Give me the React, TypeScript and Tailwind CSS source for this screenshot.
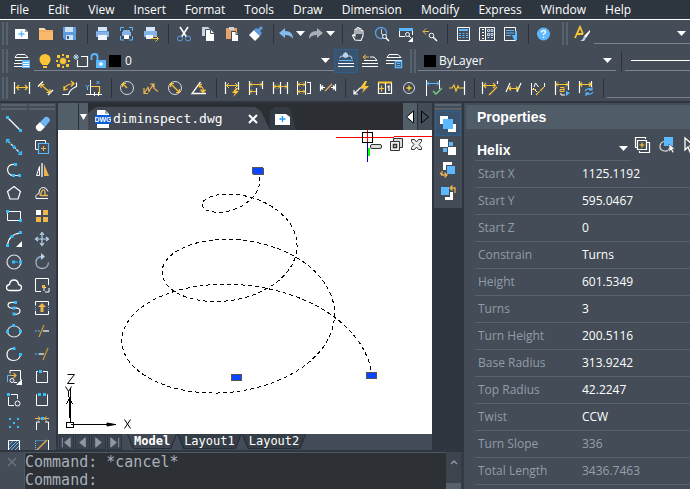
import clsx from "clsx";
import { useState } from "react";
import type { ReactNode } from "react";

const W = "#ffffff";
const Y = "#fcc437";
const B = "#5cb8ff";
const O = "#eab354";
const L = "#b9d3ee";

type DrawProps = { d: string; c?: string; w?: number; dash?: string };

const S = ({ d, c = W, w = 1, dash }: DrawProps) => (
  <path d={d} fill="none" stroke={c} strokeWidth={w} strokeDasharray={dash} />
);

const F = ({ d, c = W }: DrawProps) => <path d={d} fill={c} />;

function Icon({ children }: { children: ReactNode }) {
  return (
    <svg viewBox="0 0 18 18" className="h-[18px] w-[18px] shrink-0" aria-hidden="true">
      {children}
    </svg>
  );
}

function Caret() {
  return (
    <svg viewBox="0 0 9 5" className="pointer-events-none h-[5px] w-[9px] shrink-0" aria-hidden="true">
      <path d="M0 0h9L4.5 5z" fill="#fff" />
    </svg>
  );
}

type Tool = { label: string; icon: ReactNode; split?: boolean; active?: boolean } | null;

const standardTools: Tool[] = [
  { label: "New", icon: <><F d="M2 4h10l3 3v7H2z" /><F d="M12 4v3h3z" c="#8f9aa8" /><S d="M8.5 6v6M5.5 9h6" c={B} w={1.4} /></> },
  { label: "Open", icon: <><F d="M2 3h5l2 2h7v10H2z" c="#f0b065" /><F d="M2 3h5l2 2H2z" c="#fbdcb4" /><F d="M2 7h14v8H2z" c="#fab96d" /></> },
  { label: "Save", icon: <><F d="M2 2h13v13H4l-2-2z" c="#5d9bde" /><F d="M4 2h8v5H4z" c="#cfe1f5" /><F d="M5 10h7v5H5z" c="#cfe1f5" /><F d="M6 11h2v3H6z" c="#49627d" /></> },
  null,
  { label: "Print", icon: <><F d="M4 2h9v4H4z" c="#d6e6f7" /><F d="M2 6h13v6H2z" c="#86b4e8" /><F d="M2 6h13v1H2z" c="#5d9bde" /><F d="M4 10h9v5H4z" c="#eef5fc" /></> },
  { label: "Print Preview", icon: <><F d="M5 5h7v2H5zM4 7h9v4H4z" c="#86b4e8" /><F d="M6 10h5v4H6z" /><S d="M2.5 6V2.5H6M11 2.5h3.5V6M14.5 11v4H11M6 15H2.5v-4" c={B} /></> },
  { label: "Publish", icon: <><F d="M4 2h9v4H4z" c="#d6e6f7" /><F d="M2 6h13v6H2z" c="#86b4e8" /><F d="M4 10h7v4H4z" c="#eef5fc" /><S d="M9 13.5h7M13.5 10.5l3 3-3 3" c={Y} /></> },
  null,
  { label: "Cut", icon: <><S d="M5 2l6.5 10M13 2L6.5 12" w={1.6} /><circle cx="5" cy="13.5" r="2.5" fill="none" stroke="#5d9bde" /><circle cx="13" cy="13.5" r="2.5" fill="none" stroke="#5d9bde" /></> },
  { label: "Copy", icon: <><F d="M3 2h6l3 3v6H3z" c="#c9d5e2" /><F d="M7 5h5l3 3v8H7z" /><S d="M6.5 12V4.500H11M11.5 5v3.500H15" c="#434c57" /></> },
  { label: "Paste", icon: <><F d="M3 3h11v11H3z" c="#e8a366" /><F d="M6 2h5v3H6z" c="#c9d5e2" /><F d="M9 7h4l2 2v7H9z" /><S d="M8.5 16V6.5H13M13 7v2.5h2" c="#434c57" /></> },
  { label: "Match Properties", icon: <><F d="M2 10l5-5 6 6-5 5z" /><F d="M7 5l2-2 2 1 3-3 2 2-3 3 2 2-2 3z" c="#5d9bde" /></> },
  null,
  { label: "Undo", split: true, icon: <F d="M2 8l6-5v3c6 0 8 3 8 8-2-3-4-4-8-4v3z" c="#86b9ec" /> },
  { label: "Redo", split: true, icon: <F d="M16 8l-6-5v3c-6 0-8 3-8 8 2-3 4-4 8-4v3z" c="#a8afb8" /> },
  null,
  { label: "Pan", icon: <S d="M6 15L3.5 10.5l1-1L6 11V4.500q1-1 2 0V9 3q1-1 2 0v6-5q1-1 2 0v5-3q1-1 2 0v5l-2 4.500z" w={1.1} /> },
  { label: "Zoom Realtime", icon: <><circle cx="8" cy="8" r="5.5" fill="none" stroke="#5d9bde" strokeWidth="1.4" /><S d="M8.5 4v5l2 1" c={L} /><circle cx="11.5" cy="11.5" r="2" fill="#434c57" stroke="#fff" /><S d="M13 13l3 3" w={1.5} /></> },
  { label: "Zoom Window", icon: <><S d="M2 11.5h6M2.5 11V4" /><F d="M2 3h14v3H2z" c={B} /><S d="M15.5 6v4" /><circle cx="10.5" cy="9.5" r="2" fill="none" stroke="#fff" /><S d="M12 11l2 2" /><F d="M16 12v5h-5z" /></> },
  { label: "Zoom Previous", icon: <><S d="M2 6.5h6M5 3.5l-3 3 3 3" c={O} /><circle cx="10.5" cy="10.5" r="2.3" fill="none" stroke="#fff" /><S d="M12 12l4 4" w={1.5} /></> },
  null,
  { label: "Calculator", icon: <><S d="M3.5 2.5h12v13h-12z" /><F d="M5 4h9v2H5z" c={B} /><S d="M5 8.5h9M5 10.5h9M5 12.5h9" c={B} dash="2 1.5" w={1.2} /></> },
  { label: "Design Center", icon: <><S d="M1.5 2.5h15v13h-15zM7.500 3v12M4 4.5h2M4 7.5h2M4 10.5h2M4 13.5h2" /><S d="M9.5 4.5h2v2h-2zM13 4.5h2v2h-2zM9.5 8.5h2v2h-2zM13 8.5h2v2h-2zM9.5 12.5h2M13 12.5h2" c={L} /></> },
  { label: "Properties Palette", icon: <><S d="M2.5 2.5h11v13h-11z" /><S d="M4 5.5h8M4 8h8M4 10.5h5" c={B} /><F d="M10 10h3V6h2v9h-3z" c={B} /></> },
  null,
  { label: "Help", icon: <><circle cx="8.5" cy="9" r="6.5" fill={B} /><S d="M6.5 7.5q0-2 2-2t2 1.600q0 1.200-2 2v1.200M8.5 11.700V13" w={1.3} /></> },
];

const layerTools: Tool[] = [
  { label: "Make Current", active: true, icon: <><S d="M3 6q0-2 2-2h8q2 0 2 3" c={L} /><F d="M6 2l2.5-2L11 2v3L8.5 6 6 5z" c={L} /><S d="M2 8.5h14" c={B} /><S d="M1 11.5h16M1 14.5h16" /></> },
  { label: "Layer Previous", icon: <><S d="M2 5h6M5 2.5L2 5l3 2.5" c={O} /><S d="M9 5h4l3 3.500H3M1 11.5h16M1 14.5h16" /></> },
  { label: "Layer States", icon: <><S d="M4 2.5h9l3 3H2zM1 8.5h16M1 11.5h8" /><S d="M10.5 9.5h6v6h-6z" c={B} w={1.5} /><F d="M12 11h3v1h-3zM12 13h3v1h-3z" c={B} /></> },
];

const dimensionTools: Tool[] = [
  { label: "Linear", icon: <><S d="M1.5 3v12M16.5 3v12" w={1.2} /><S d="M3 8.5h12M6 6L3.5 8.5 6 11M12 6l2.5 2.5L12 11" c={Y} w={1.2} /></> },
  { label: "Aligned", icon: <><S d="M1 7.5L6 2.5M11 16l5-5" w={1.4} /><S d="M4 5.5l9 8M4 9V5.5h3.5M13 10v3.5H9.5" c={Y} w={1.2} /></> },
  { label: "Arc Length", icon: <><S d="M1.5 15.5h6q1-5 8-8v-4" w={1.2} /><S d="M3 11q1-6 10-6.500M3 7v4l4-1M10 2l3 2.5-3 3" c={Y} w={1.2} /></> },
  { label: "Ordinate", icon: <><S d="M5.5 1v15M1 15.5h16M9.5 13v4M13.5 13v4" /><S d="M6 7.5h8.5v7" c={Y} w={1.2} /><S d="M1 6l1.5 2.5L4 6M2.5 8v3M11.5 2l3 3M14.5 2l-3 3" c={B} /></> },
  null,
  { label: "Radius", icon: <><circle cx="9" cy="9" r="6.5" fill="none" stroke="#d4d9df" /><S d="M9 9L5 5M4.5 8V4.500H8" c={Y} w={1.2} /></> },
  { label: "Jogged", icon: <S d="M2 14.5l4-6 1 4 4-7 1 4 4 3M2 9v5.500h4M8 5h4v4" c={O} w={1.2} /> },
  { label: "Diameter", icon: <><circle cx="9" cy="9" r="6.5" fill="none" stroke="#d4d9df" /><S d="M5 5l8 8M4.5 8V4.500H8M13.5 10v3.500H10" c={Y} w={1.2} /></> },
  { label: "Angular", icon: <><S d="M10.5 3L2 14.5h14" w={1.3} /><S d="M9 6q5 2 4 7M12 5L8.5 6l2 3M10.5 10.5L13 13.5l2.5-3" c={Y} w={1.2} /></> },
  null,
  { label: "Quick Dimension", icon: <><S d="M2.5 3v12M15.5 3v8" w={1.2} /><S d="M3 6.5h12M6 4L3.5 6.5 6 9M12 4l2.5 2.5L12 9" c={Y} /><F d="M13 9l-4 5h3l-2 4 6-6h-3l2-3z" c={Y} /></> },
  { label: "Baseline", icon: <><S d="M2.5 2v14M15.5 2v8M9.5 9v7" w={1.2} /><S d="M3 5.5h12M5 3.5l-2 2 2 2M13 3.5l2 2-2 2M3 12.5h6M5 10.5l-2 2 2 2" c={Y} /></> },
  { label: "Continue", icon: <><S d="M2.5 3v12M9.5 3v12M16.5 3v12" w={1.2} /><S d="M3 7.5h13M5 5.5l-2 2 2 2M14 5.5l2 2-2 2M7 5.5l2 2-2 2" c={Y} /></> },
  { label: "Dimension Space", icon: <><S d="M2.5 2v14M10.5 2v14M12 3.5h4M12 14.5h4M15.5 4v11" /><S d="M3 5.5h7M5 3.5l-2 2 2 2M8 3.5l2 2-2 2M3 12.5h7M5 10.5l-2 2 2 2M8 10.5l2 2-2 2" c={Y} /></> },
  { label: "Dimension Break", icon: <><S d="M1.5 5v7M16.5 5v7M2 8.5h4M12 8.5h4M4 6.5l-2 2 2 2M14 6.5l2 2-2 2" w={1.2} /><S d="M6 12l7-7" c={O} w={1.2} /></> },
  null,
  { label: "Leader", icon: <><S d="M2 15l6-6h5M2 11v4h4" w={1.2} /><F d="M13 2L8 9h4l-2 5 7-7h-4l2-5z" c={Y} /></> },
  { label: "Tolerance", icon: <><S d="M2 3.5h14" c={Y} w={2} /><S d="M2.5 4v10.500h13V4M9.5 4v10M11.5 8l1.500-1v5" w={1.2} /><S d="M5.5 6.5v6M3 9.5h5" c={Y} w={1.2} /></> },
  { label: "Center Mark", icon: <><circle cx="9" cy="9" r="5.5" fill="none" stroke="#d4d9df" /><S d="M9 6.5v5M6.5 9h5" c={Y} w={1.4} /></> },
  { label: "Inspection", icon: <><S d="M2.5 1v16M15.5 1v9" /><S d="M3 4.5h12M5 2.5l-2 2 2 2M13 2.5l2 2-2 2" c={B} /><S d="M9 12l3 3 6-6" c="#7bd38b" w={1.3} /></> },
  { label: "Jogged Linear", icon: <><S d="M16.5 2v14" w={1.2} /><S d="M1 9h3l2-3 2 6 2-5 1 2h5" c={Y} w={1.2} /></> },
  null,
  { label: "Edit", icon: <><S d="M1.5 3v12M16.5 2v3" w={1.2} /><S d="M2 6.5h12M5 4L2.5 6.5 5 9M12 4l2.5 2.5L12 9M8 16l8-8" c={Y} w={1.1} /></> },
  { label: "Oblique", icon: <><S d="M1 13l4-9M12 13l4-9" w={1.2} /><S d="M4 9.5h9M6 7.5l-2 2 2 2M11 7.5l2 2-2 2" c={Y} w={1.2} /></> },
  { label: "Text Angle", icon: <><S d="M2.5 4v12M4 9l4 4M5 8l1.500-4 3 4M15.5 4v4" /><S d="M3 10.5h4M7 16l9-9" c={Y} w={1.1} dash="5 1" /></> },
  { label: "Text Edit", icon: <><S d="M2.5 2v14M15.5 2v9" w={1.2} /><S d="M3 5.5h12M5 3.5l-2 2 2 2M13 3.5l2 2-2 2M7 8.5h4v4H7v-2h4" c={Y} /><S d="M8 14v2h4" /><F d="M13 12l4 2-4 3z" c={B} /></> },
  { label: "Update", icon: <><S d="M2.5 2v12M14.5 2v6" w={1.2} /><S d="M3 5.5h11M5 3.5l-2 2 2 2M12 3.5l2 2-2 2" c={Y} w={1.2} /><S d="M8 12q3-4 7-1M15 8v3h-3M16 13q-3 4-7 1M9 17v-3h3" c={B} w={1.2} /></> },
  null,
];

const Node = ({ x, y }: { x: number; y: number }) => (
  <rect x={x - 1.5} y={y - 1.5} width="3" height="3" fill="#33bdfb" />
);

const drawTools: Tool[] = [
  { label: "Line", icon: <><S d="M3 3l12 12" w={1.2} /><Node x={2.5} y={2.5} /><Node x={15.5} y={15.5} /></> },
  { label: "Construction Line", icon: <><S d="M3 3l12 12" dash="3 1" w={1.2} /><Node x={9} y={9} /><S d="M1.5 5V1.500H5M16.5 13v3.500H13M2 2l3 3M16 16l-3-3" c="#33bdfb" w={1.2} /></> },
  { label: "Polyline", icon: <><S d="M10 3.5q-7-.5-7.500 5 .5 6 6 6h6" w={1.2} /><Node x={10.5} y={3.5} /><Node x={8.5} y={14.5} /><Node x={14.5} y={14.5} /></> },
  { label: "Polygon", icon: <S d="M9 2.5l6.5 5-2.5 7.500H5L2.5 7.5z" w={1.2} /> },
  { label: "Rectangle", icon: <><S d="M2.5 4.5h13v9h-13z" /><Node x={2.5} y={4.5} /><Node x={15.5} y={13.5} /></> },
  { label: "Arc", icon: <><S d="M2.5 15.5q1-11 12.500-12.500" w={1.2} /><Node x={2.5} y={15.5} /><Node x={7} y={6.5} /><Node x={15.5} y={2.5} /><F d="M17 11v6h-6z" /></> },
  { label: "Circle", icon: <><circle cx="9" cy="9" r="7" fill="none" stroke="#dde2e7" strokeWidth="1.2" /><S d="M9 9h6" c="#33bdfb" dash="4 1" /><Node x={8.5} y={9} /><Node x={15.5} y={9} /></> },
  { label: "Revision Cloud", icon: <S d="M5 14.5q-3.500 0-3.500-3 0-2.500 3-3Q5 4 9 4t4.500 4.500q3 .5 3 3 0 3-3.500 3z" w={1.3} /> },
  { label: "Spline", icon: <><S d="M11 3.500Q3 2.500 3 6t6 3 6 3-6 3.500" w={1.2} /><Node x={10.5} y={3.5} /><Node x={9} y={9} /><Node x={9} y={15} /></> },
  { label: "Ellipse", icon: <><ellipse cx="9" cy="9.5" rx="6.5" ry="5.5" fill="none" stroke="#dde2e7" strokeWidth="1.2" /><Node x={8.5} y={3.5} /><Node x={2.5} y={9.5} /><Node x={15.5} y={9.5} /></> },
  { label: "Ellipse Arc", icon: <><S d="M8 3.500Q2 4 2 9.500t6.500 6q6 0 7-6" w={1.2} /><Node x={9} y={3.5} /><Node x={15.5} y={9.5} /></> },
  { label: "Insert Block", icon: <><S d="M5 2.5h10.500V12M5 2.5v3" /><S d="M2.5 14V7.500h4" c={B} /><S d="M5 7.5h6M8.5 5l2.5 2.5L8.5 10" c={O} w={1.2} /><circle cx="7" cy="12.5" r="2" fill="none" stroke="#fff" /><S d="M9 14.5h3" /><F d="M17 11v6h-6z" /></> },
  { label: "Make Block", icon: <><S d="M6 3.5h6.500V8M3.5 6v8.500H9" /><Node x={3.5} y={3.5} /><circle cx="12.5" cy="12.5" r="2.5" fill="none" stroke="#fff" /></> },
  { label: "Point", icon: <><F d="M8 8h2v2H8zM4 4h2v2H4zM12 4h2v2h-2zM4 12h2v2H4zM12 12h2v2h-2z" c="#33bdfb" /></> },
  { label: "Hatch", icon: <><S d="M3.5 3.5h11v12h-11z" /><S d="M4 8l4-4M4 12l8-8M4 15L14 5M8 15l6-6M12 15l2-2" c={B} /></> },
];

const modifyTools: Tool[] = [
  { label: "Erase", icon: <><F d="M3 11l4-4 5 5-4 4q-2 1-4-1t-1-4z" /><F d="M7 7l5-5q2-1 4 1t0 4l-4 5z" c="#6fb6f2" /></> },
  { label: "Copy Objects", icon: <><S d="M5 11.500H2.500v-9h10V5" /><S d="M5.500 5.500h10v10h-10z" c={B} w={1.2} /><S d="M10.5 8v5M8 10.5h5" c={O} w={1.1} /></> },
  { label: "Mirror", icon: <><S d="M9 2v14" w={1.3} /><S d="M3.5 14.5h3v-9z" /><F d="M11 3l5 12h-5z" c={O} /></> },
  { label: "Offset", icon: <><S d="M15 14.500H3q-1-4 3-5 0-6 4.500-6 3 0 4.500 4" /><S d="M15 11.500H8q-2 0 0-2l1-3q3-2 3 2v3" c={O} w={1.3} /></> },
  { label: "Array", icon: <><F d="M3 3h5v5H3z" /><F d="M10 3h5v5h-5zM3 10h5v5H3zM10 10h5v5h-5z" c="#f0b64e" /></> },
  { label: "Move", icon: <S d="M9 3v12M3 9h12M7 5l2-2.500L11 5M7 13l2 2.500 2-2.500M5 7L2.500 9 5 11M13 7l2.500 2-2.500 2" c={L} w={1.2} /> },
  { label: "Rotate", icon: <><S d="M9 3.500Q3 4 3 9.500t6 6q6 0 6.500-6" c="#9db2c8" w={1.3} /><F d="M8 0l4 3.500L8 7z" c={L} /></> },
  { label: "Scale", icon: <><S d="M8 15.500H2.500v-13h13V9" /><S d="M11 15v-3.500h2M16 12v4h-4" /><F d="M9 9h3v3H9z" c="#f0b64e" /></> },
  { label: "Stretch", icon: <><S d="M2.5 6V2.500h13V6M2.5 12v3.500h13V12" /><S d="M2.5 6v6M15.5 6v6" c={B} dash="1 1" /><F d="M9 4l4 4h-2.500v5h-3V8H5z" c="#f0b64e" /></> },
  { label: "Trim", icon: <><S d="M2 9h5" c={B} dash="2 1" /><S d="M10 9h6" w={1.2} /><S d="M6 15L11 3" c="#c79335" w={1.3} /></> },
  { label: "Extend", icon: <><S d="M2 9h4" c={B} dash="2 1" /><S d="M6 9h5" w={1.2} /><S d="M10 15l5-12" c="#c79335" w={1.3} /></> },
  { label: "Break at Point", icon: <><S d="M5 3.500H3.500v11h11v-11H10" /><Node x={7.5} y={3.5} /></> },
  { label: "Break", icon: <><S d="M4 3.500h-.5v11h11v-11H14" /><Node x={6.5} y={3.5} /><Node x={11.5} y={3.5} /></> },
  { label: "Join", icon: <><S d="M3.5 16V8H7M15.5 16V8H12" /><S d="M2 4.500h5M5 2.500l2.500 2L5 6.500M16 4.500h-4M13.500 2.500l-2.500 2 2.500 2" c={O} /><Node x={9.5} y={4.5} /></> },
  { label: "Chamfer", icon: <><S d="M2.5 3.5h9M2.5 4v12" c={B} dash="1 1" /><S d="M3 14L14 3" c={O} w={1.2} /><S d="M15.5 3v13" /></> },
];

const orderTools: Tool[] = [
  { label: "Bring to Front", active: true, icon: <><F d="M1 1h8v3H4v5H1zM17 17H9v-3h5V9h3z" /><F d="M4 4h10v10H4z" c={B} /></> },
  { label: "Send to Back", icon: <><F d="M1 1h8v8H1zM9 9h8v8H9z" /><F d="M10 4h4v4h-4zM4 10h4v4H4z" c={B} /></> },
  { label: "Bring Above Objects", icon: <><F d="M4 1h9v3H7v5H4z" /><F d="M8 5h8v8H8z" c={B} /><S d="M3 10v4h5M5.500 11.500L8 14l-2.500 2.500M1 12l2 2" c={O} w={1.3} /></> },
  { label: "Send Under Objects", icon: <><F d="M14 8v8H6v-3h5V8z" /><F d="M2 3h8v8H2z" c={B} /><S d="M16 9V4h-5M13.500 1.500L11 4l2.500 2.500" c={O} w={1.3} /></> },
];

function ToolButton({ tool }: { tool: Tool }) {
  if (!tool) {
    return <span className="ml-[5px] mr-[3px] h-5 w-px shrink-0 bg-[#2c333c]" />;
  }
  return (
    <button
      type="button"
      aria-label={tool.label}
      title={tool.label}
      className={clsx(
        "flex shrink-0 items-center hover:bg-[#526071]",
        tool.split ? "h-6 w-[30px] gap-px" : "h-6 w-6 justify-center",
        tool.active && "bg-[#3a5470] outline outline-1 -outline-offset-1 outline-[#2f5f8c]"
      )}
    >
      <Icon>{tool.icon}</Icon>
      {tool.split && <Caret />}
    </button>
  );
}

function Grip() {
  return (
    <span className="mx-[2px] flex shrink-0 gap-[2px] self-stretch py-[2px]">
      <span className="w-[2px] bg-[#56626e]" />
      <span className="w-[2px] bg-[#56626e]" />
    </span>
  );
}

const menus = ["File", "Edit", "View", "Insert", "Format", "Tools", "Draw", "Dimension", "Modify", "Express", "Window", "Help"];

function MenuBar() {
  return (
    <nav className="flex h-5 shrink-0 items-center gap-[19px] border-b border-white bg-[#2d353e] pl-[10px]">
      {menus.map((m) => (
        <button key={m} type="button" className="text-[12px] leading-4 text-white">
          {m}
        </button>
      ))}
    </nav>
  );
}

function Toolbars() {
  return (
    <header className="shrink-0 overflow-hidden bg-[#434c57]">
      <div className="flex h-[27px] items-center">
        <Grip />
        {standardTools.map((t, i) => (
          <ToolButton key={i} tool={t} />
        ))}
        <span className="ml-1 flex h-full">
          <Grip />
        </span>
        <button type="button" aria-label="Text Style" className="flex h-6 w-6 shrink-0 items-center justify-center">
          <Icon>
            <S d="M2 13L7 2l3 7M4 9h6" c={Y} w={1.8} />
            <F d="M17 5l-6 6 2 2 4-6z" />
            <F d="M11 11l2 2-2 3H7q3-1 4-5z" c={L} />
          </Icon>
        </button>
        <div className="flex h-5 min-w-0 flex-1 items-center justify-end border-b border-[#7a838d] pr-1">
          <Caret />
        </div>
      </div>

      <div className="flex h-7 items-center">
        <Grip />
        <button type="button" aria-label="Layer Properties" className="flex h-6 w-6 shrink-0 items-center justify-center">
          <Icon>
            <S d="M4 2.5h8l3 3H2zM2 8.5h14M1 11.5h8M1 14.5h8" />
            <F d="M9 8h8v8H9z" c={B} />
            <S d="M10 10.5h6M10 12.5h6M10 14.5h6" />
          </Icon>
        </button>
        <div className="flex h-5 w-[300px] shrink-0 items-center border-b border-[#7a838d] pl-[2px] pr-1">
          <Icon>
            <circle cx="9" cy="7.5" r="5.5" fill={Y} />
            <F d="M6 11h6v2H6zM7 14h4v2H7z" c={Y} />
          </Icon>
          <Icon>
            <circle cx="9" cy="9" r="3.5" fill={Y} stroke="#434c57" strokeWidth=".5" />
            <F d="M3 3h3v3H3zM12 3h3v3h-3zM3 12h3v3H3zM12 12h3v3h-3zM8 2h2v2H8zM8 14h2v2H8zM2 8h2v2H2zM14 8h2v2h-2z" c={Y} />
          </Icon>
          <Icon>
            <S d="M5.5 8v6.500h10v-10H9" w={1.2} />
            <S d="M4 2v6M1 5h6M2 3l4 4M6 3L2 7" c={L} />
          </Icon>
          <Icon>
            <F d="M6 8h10v8H6z" c={B} />
            <S d="M1.5 8V4.500q0-2.500 3-2.500t3 2.500v4" c={B} w={1.8} />
            <S d="M11 10v4M9 12h4" w={1.4} />
          </Icon>
          <span className="ml-px h-3 w-3 shrink-0 bg-black" />
          <select aria-label="Layer" className="min-w-0 flex-1 appearance-none bg-transparent pl-1 text-[12px] leading-4 text-white outline-none">
            <option>0</option>
          </select>
          <Caret />
        </div>
        {layerTools.map((t, i) => (
          <ToolButton key={i} tool={t} />
        ))}
        <span className="ml-[2px] flex h-full">
          <Grip />
        </span>
        <div className="flex h-5 w-[198px] shrink-0 items-center border-b border-[#7a838d] pl-[6px] pr-1">
          <span className="h-3 w-3 shrink-0 bg-black" />
          <select aria-label="Color" className="min-w-0 flex-1 appearance-none bg-transparent pl-[3px] text-[12px] leading-4 text-white outline-none">
            <option>ByLayer</option>
          </select>
          <Caret />
        </div>
        <ToolButton tool={null} />
        <div className="flex h-5 min-w-0 flex-1 items-center border-b border-[#7a838d] pl-[6px]">
          <span className="h-px w-full bg-white" />
        </div>
      </div>

      <div className="flex h-[26px] items-center">
        <Grip />
        {dimensionTools.map((t, i) => (
          <ToolButton key={i} tool={t} />
        ))}
        <div className="h-5 min-w-0 flex-1 border-b border-[#7a838d]" />
      </div>
    </header>
  );
}

function ToolColumn({ tools }: { tools: Tool[] }) {
  return (
    <div className="flex w-7 shrink-0 flex-col items-center">
      <div className="mb-[2px] flex w-full flex-col gap-[2px] px-px pt-px">
        <span className="h-[2px] bg-[#56626e]" />
        <span className="h-[2px] bg-[#56626e]" />
      </div>
      {tools.map((t) => (
        <button
          key={t?.label}
          type="button"
          aria-label={t?.label}
          title={t?.label}
          className={clsx(
            "flex h-[23px] w-6 shrink-0 items-center justify-center hover:bg-[#526071]",
            t?.active && "bg-[#3a5470] outline outline-1 outline-[#2f5f8c]"
          )}
        >
          <Icon>{t?.icon}</Icon>
        </button>
      ))}
    </div>
  );
}

function DocumentTabs() {
  return (
    <div className="flex h-[27px] shrink-0 items-stretch bg-[#2b2e33]">
      <span className="w-5 shrink-0 bg-[#525e68]" />
      <button type="button" aria-label="Tab list" className="ml-px flex w-[9px] shrink-0 items-center justify-center bg-[#525e68]">
        <svg viewBox="0 0 7 6" className="h-[6px] w-[7px]" aria-hidden="true">
          <path d="M0 0h7L3.5 6z" fill="#fff" />
        </svg>
      </button>
      <div className="mt-1 flex w-[182px] items-center bg-[#434852] pl-[7px] pr-3 [clip-path:polygon(0_6px,8px_0,calc(100%-15px)_0,calc(100%-9px)_4px,100%_100%,0_100%)]">
        <svg viewBox="0 0 16 20" className="h-5 w-4 shrink-0" aria-hidden="true">
          <path d="M2 1h8l4 4v14H2z" fill="#fff" />
          <path d="M10 1v4h4z" fill="#a4aab2" />
          <path d="M0 6h16v9H0z" fill="#0a5bd6" />
          <text x="8" y="13" fontSize="7" fontWeight="700" textAnchor="middle" fill="#fff" fontFamily="Liberation Sans, sans-serif">
            DWG
          </text>
        </svg>
        <span className="flex-1 pl-[2px] font-['DejaVu_Sans_Mono',monospace] text-[13px] leading-5 text-white">diminspect.dwg</span>
        <button type="button" aria-label="Close" className="shrink-0">
          <svg viewBox="0 0 10 10" className="h-[10px] w-[10px]" aria-hidden="true">
            <path d="M1 1l8 8M9 1L1 9" stroke="#fff" strokeWidth="2" />
          </svg>
        </button>
      </div>
      <button type="button" aria-label="New drawing" className="mt-1 flex w-[26px] items-center justify-center bg-[#353b45] [clip-path:polygon(0_4px,5px_0,70%_0,80%_4px,100%_100%,0_100%)]">
        <Icon>
          <F d="M1 4h11l4 3v8H1z" />
          <S d="M8.5 6v6M5.5 9h6" c="#1e9af5" w={1.4} />
        </Icon>
      </button>
      <span className="flex-1" />
      <button type="button" aria-label="Previous tab" className="flex w-[14px] items-center justify-center bg-[#525e68]">
        <svg viewBox="0 0 8 14" className="h-[14px] w-2" aria-hidden="true">
          <path d="M7.5 1v12l-7-6z" fill="#fff" stroke="#000" />
        </svg>
      </button>
      <button type="button" aria-label="Next tab" className="ml-px flex w-[14px] items-center justify-center bg-[#434d58]">
        <svg viewBox="0 0 8 14" className="h-[14px] w-2" aria-hidden="true">
          <path d="M.5 1v12l7-6z" fill="#434d58" stroke="#000" />
        </svg>
      </button>
    </div>
  );
}

// Conical helix seen from above at an angle, three turns from base to top
function helixPath() {
  const pts: string[] = [];
  for (let i = 0; i <= 360; i++) {
    const t = i / 120;
    const a = 2 * Math.PI * t + 0.02;
    const r = 135 - 39 * t;
    const x = 179 + 1.3 * t + r * Math.cos(a);
    const y = 248 - 68.6 * t - 0.61 * r * Math.sin(a);
    pts.push(`${x.toFixed(1)} ${y.toFixed(1)}`);
  }
  return `M${pts.join("L")}`;
}

function GripBox({ x, y }: { x: number; y: number }) {
  return <rect x={x - 5} y={y - 3} width="10" height="6" fill="#0a46ff" stroke="#555" />;
}

function Canvas() {
  return (
    <div className="relative min-h-0 flex-1 overflow-hidden bg-white">
      <svg className="absolute inset-0 h-full w-full" aria-label="Helix drawing">
        <path d={helixPath()} fill="none" stroke="#000" strokeDasharray="4 3" shapeRendering="crispEdges" />
        <GripBox x={199.5} y={40.5} />
        <GripBox x={200.5} y={41.5} />
        <path d="M195 38h9v5h-9z" fill="#0a46ff" />
        <GripBox x={178.5} y={247.5} />
        <GripBox x={313.5} y={245.5} />
      </svg>

      {/* UCS icon */}
      <svg viewBox="0 0 80 64" className="absolute bottom-0 left-0 h-16 w-20" fill="none" stroke="#000" aria-hidden="true">
        <path d="M8.5 52.5h7v5h-7zM12.5 52V18M13 54.5h45" shapeRendering="crispEdges" />
        <path d="M49 53l8 1.5-8 1.5z" fill="#000" />
        <path d="M11.5 48V28M8.5 34l3-6 3 6" shapeRendering="crispEdges" />
        <path d="M9.5 4.500h7l-7 9h7M7.500 16.500l3 5 3-5M10.500 21v6" />
        <path d="M66.500 49.500l6 9M72.500 49.500l-6 9" />
      </svg>

      {/* Crosshair */}
      <svg viewBox="0 0 96 34" className="absolute right-0 top-0 h-[34px] w-24" fill="none" shapeRendering="crispEdges" aria-hidden="true">
        <path d="M0 7.5h58M58 6.5h38M31.5 0v12" stroke="#f00" />
        <path d="M31.5 12v20" stroke="#00d" />
        <path d="M32.5 18v8" stroke="#0f0" strokeWidth="2" />
        <path d="M26.5 2.5h10v10h-10z" stroke="#000" />
      </svg>

      <div className="absolute right-[9px] top-2 flex items-center gap-[7px]">
        <button type="button" aria-label="Minimize">
          <svg viewBox="0 0 13 13" className="h-[13px] w-[13px]" aria-hidden="true">
            <rect x=".5" y="6.5" width="11" height="4" rx="1.5" fill="#ddd" stroke="#333" />
          </svg>
        </button>
        <button type="button" aria-label="Restore">
          <svg viewBox="0 0 13 13" className="h-[13px] w-[13px]" aria-hidden="true">
            <path d="M3.5 3V.5h9v9H10" fill="#ddd" stroke="#333" />
            <path d="M.5 3.5h9v9h-9z" fill="#eee" stroke="#333" />
            <path d="M3.5 6.5h3v3h-3z" fill="#fff" stroke="#333" strokeWidth="1.5" />
          </svg>
        </button>
        <button type="button" aria-label="Close drawing">
          <svg viewBox="0 0 13 13" className="h-[13px] w-[13px]" aria-hidden="true">
            <path d="M1.500 1.500h3l2 2.500 2-2.500h3v2l-2.500 3 2.500 3v2h-3l-2-2.500-2 2.500h-3v-2l2.500-3-2.500-3z" fill="#eee" stroke="#333" />
          </svg>
        </button>
      </div>
    </div>
  );
}

const layouts = ["Model", "Layout1", "Layout2"];
const navIcons = [
  { label: "First", d: "M2.5 2v10M11 2v10L5 7z" },
  { label: "Previous", d: "M10 2v10L4 7z" },
  { label: "Next", d: "M4 2v10l6-5z" },
  { label: "Last", d: "M11.5 2v10M3 2v10l6-5z" },
];

function LayoutTabs() {
  const [active, setActive] = useState("Model");

  return (
    <div className="flex h-4 shrink-0 items-stretch bg-[#434b58] font-['DejaVu_Sans_Mono',monospace]">
      <div className="flex items-stretch gap-px pl-px">
        {navIcons.map((n) => (
          <button key={n.label} type="button" aria-label={n.label} className="flex w-[15px] items-center justify-center border border-[#2f363f] bg-[#3b434e]">
            <svg viewBox="0 0 14 14" className="h-[13px] w-[13px] shrink-0" aria-hidden="true">
              <path d={n.d} fill="#8d98a4" stroke="#8d98a4" />
            </svg>
          </button>
        ))}
      </div>
      <div className="flex pl-[5px]">
        {layouts.map((name) => (
          <button
            key={name}
            type="button"
            onClick={() => setActive(name)}
            className="mb-px bg-[#262c33] text-[12px] leading-[14px] text-white [clip-path:polygon(0_0,100%_0,calc(100%-6px)_100%,6px_100%)]"
          >
            <span
              className={clsx(
                "mx-px mb-px block px-[6px] [clip-path:polygon(0_0,100%_0,calc(100%-6px)_100%,6px_100%)]",
                active === name ? "bg-[#3f4852] font-bold" : "bg-[#353d46]"
              )}
            >
              {name}
            </span>
          </button>
        ))}
      </div>
    </div>
  );
}

function CommandLine() {
  return (
    <section className="flex h-[39px] shrink-0 border-t-2 border-[#2f3640] bg-[#434c57] font-['DejaVu_Sans_Mono',monospace] text-[15px] leading-[18px] text-[#a7b0bb]">
      <button type="button" aria-label="Close command window" className="flex w-6 shrink-0 justify-center pt-[5px]">
        <svg viewBox="0 0 10 10" className="h-[10px] w-[10px]" aria-hidden="true">
          <path d="M1 1l8 8M9 1L1 9" stroke="#69737f" strokeWidth="1.5" />
        </svg>
      </button>
      <div className="min-w-0 flex-1 border-l border-t border-[#4d5863] bg-[#2d3035]">
        <p>Command: *cancel*</p>
        <div className="flex h-[18px]">
          <label htmlFor="command">Command:</label>
          <input id="command" type="text" className="ml-2 min-w-0 flex-1 bg-transparent outline-none" />
        </div>
      </div>
      <div className="flex w-[15px] shrink-0 flex-col justify-between bg-[#3d444d]">
        <svg viewBox="0 0 15 20" className="h-5 w-[15px]" aria-hidden="true">
          <path d="M5 12l3-3 3 3" fill="none" stroke="#8d98a4" strokeWidth="1.5" />
        </svg>
        <span className="h-[6px] bg-[#56616c]" />
      </div>
      <span className="w-[3px] shrink-0 bg-[#333b45]" />
    </section>
  );
}

type Property = { name: string; value: string; options?: string[]; readOnly?: boolean };

const properties: Property[] = [
  { name: "Start X", value: "1125.1192" },
  { name: "Start Y", value: "595.0467" },
  { name: "Start Z", value: "0" },
  { name: "Constrain", value: "Turns", options: ["Turns", "Turn Height", "Height"] },
  { name: "Height", value: "601.5349" },
  { name: "Turns", value: "3" },
  { name: "Turn Height", value: "200.5116" },
  { name: "Base Radius", value: "313.9242" },
  { name: "Top Radius", value: "42.2247" },
  { name: "Twist", value: "CCW", options: ["CCW", "CW"] },
  { name: "Turn Slope", value: "336", readOnly: true },
  { name: "Total Length", value: "3436.7463", readOnly: true },
];

function PropertyRow({ prop }: { prop: Property }) {
  const id = prop.name.toLowerCase().replace(" ", "-");
  const field = clsx(
    "min-w-0 flex-1 appearance-none bg-transparent text-[12px] leading-4 outline-none",
    prop.readOnly ? "text-[#96a0ab]" : "text-white"
  );

  return (
    <div className="flex h-[27px] items-center border-b border-[#56626e] pl-[3px]">
      <label htmlFor={id} className="w-[104px] shrink-0 text-[12px] leading-4 text-[#929ca7]">
        {prop.name}
      </label>
      {prop.options ? (
        <select id={id} defaultValue={prop.value} className={field}>
          {prop.options.map((o) => (
            <option key={o}>{o}</option>
          ))}
        </select>
      ) : (
        <input id={id} type="text" defaultValue={prop.value} readOnly={prop.readOnly} className={field} />
      )}
    </div>
  );
}

function PropertiesPanel() {
  return (
    <aside className="w-[226px] shrink-0 overflow-hidden bg-[#434c57] pl-[2px] pt-[2px]">
      <h2 className="h-6 bg-[#505c67] pl-[11px] font-['Liberation_Sans',sans-serif] text-[14px] font-bold leading-6 text-white">
        Properties
      </h2>
      <div className="flex h-8 items-stretch pl-[9px]">
        <div className="flex w-[156px] shrink-0 items-end border-b border-[#56626e] pb-[2px]">
          <select aria-label="Object type" className="min-w-0 flex-1 appearance-none bg-transparent pl-[2px] font-['Liberation_Sans',sans-serif] text-[14px] font-bold leading-4 text-white outline-none">
            <option>Helix</option>
          </select>
          <span className="flex h-5 items-center pr-[3px]">
            <Caret />
          </span>
        </div>
        <div className="flex items-center gap-[7px] pl-[2px]">
          <button type="button" aria-label="Toggle pick add">
            <Icon>
              <S d="M4 11.500H2.500v-10h10V3M14 6.500h2.500v10h-10V15M4.500 4.500h9v9h-9z" w={1.2} />
              <S d="M9 6.500v5M6.500 9h5" c={Y} w={1.2} />
            </Icon>
          </button>
          <button type="button" aria-label="Select objects">
            <Icon>
              <S d="M6 5.500q-4 1-4 5t4.500 4.500 4.500-3" c="#d4d9df" w={1.2} />
              <F d="M6 1h9v9H6z" c={B} />
              <path d="M11 8v8l2-2 1.500 3 1.500-1-1.500-3h2.500z" fill="#fff" stroke="#434c57" strokeWidth=".6" />
            </Icon>
          </button>
          <button type="button" aria-label="Quick select">
            <Icon>
              <path d="M2 2v12l3-3 2 5 2-1-2-5h4z" fill="#434c57" stroke="#fff" strokeWidth="1.3" />
            </Icon>
          </button>
        </div>
      </div>
      <div className="pl-[9px]">
        {properties.map((p) => (
          <PropertyRow key={p.name} prop={p} />
        ))}
      </div>
    </aside>
  );
}

export default function App() {
  return (
    <div className="flex h-screen flex-col overflow-hidden bg-[#2f3640] font-['Open_Sans',sans-serif]">
      <MenuBar />
      <Toolbars />
      <div className="mt-[2px] flex min-h-0 flex-1">
        <div className="flex min-w-0 flex-1 flex-col">
          <div className="flex min-h-0 flex-1">
            <div className="flex shrink-0 overflow-hidden bg-[#434c57]">
              <ToolColumn tools={drawTools} />
              <ToolColumn tools={modifyTools} />
            </div>
            <main className="ml-[2px] flex min-w-0 flex-1 flex-col">
              <DocumentTabs />
              <Canvas />
              <LayoutTabs />
            </main>
            <div className="mx-[2px] self-start bg-[#434c57] pb-1">
              <ToolColumn tools={orderTools} />
            </div>
          </div>
          <CommandLine />
        </div>
        <PropertiesPanel />
      </div>
    </div>
  );
}
